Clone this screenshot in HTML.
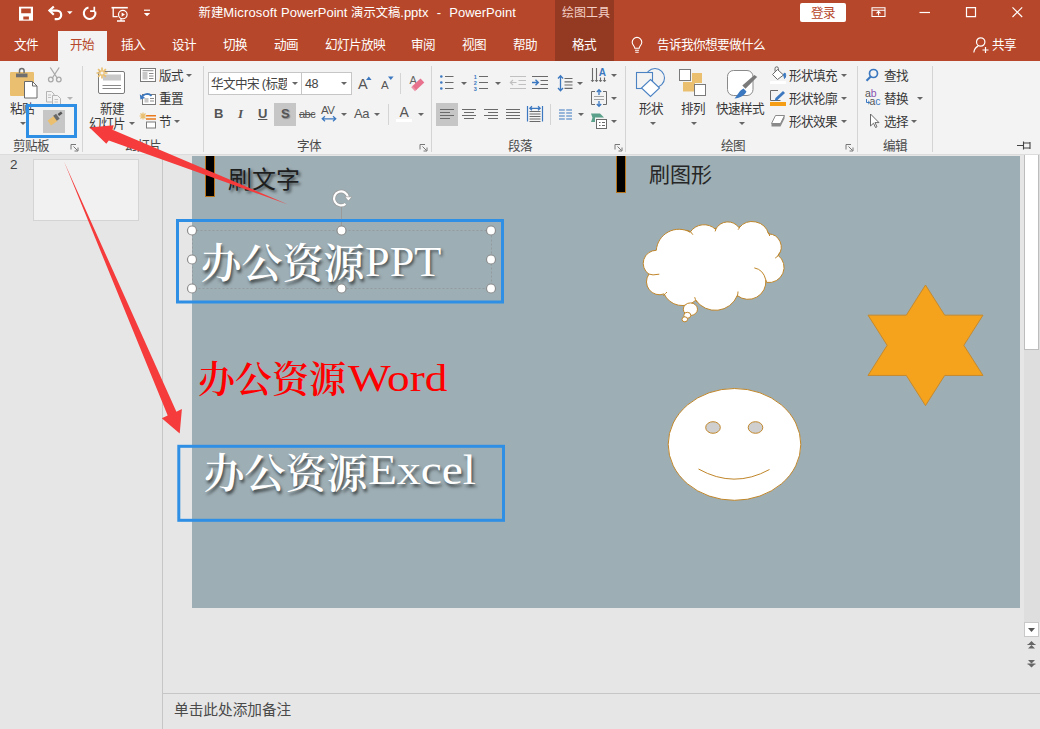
<!DOCTYPE html>
<html lang="zh-CN">
<head>
<meta charset="utf-8">
<title>PowerPoint</title>
<style>
*{box-sizing:border-box;margin:0;padding:0}
html,body{width:1040px;height:729px;overflow:hidden;background:#e6e6e6}
body{position:relative;font-family:"Liberation Sans","Noto Sans CJK SC",sans-serif;font-size:12px;color:#262626}
.abs{position:absolute}
#title{position:absolute;left:0;top:0;width:1040px;height:61px;background:#b7472a}
#ctx{position:absolute;left:555px;top:0;width:59px;height:61px;background:#953a22}
.tt{position:absolute;color:#fff;white-space:nowrap;line-height:16px}
.tab{position:absolute;top:37px;color:#fff;font-size:12.600px;letter-spacing:-0.600px;line-height:16px;white-space:nowrap}
#tabact{position:absolute;left:58px;top:31px;width:49px;height:30px;background:#f3f3f3}
#ribbon{position:absolute;left:0;top:61px;width:1040px;height:94px;background:#f3f3f3;border-bottom:1px solid #dcdcdc}
.sep{position:absolute;top:66px;width:1px;height:85.500px;background:#d4d4d4}
.gl{position:absolute;top:138.500px;font-size:12.600px;letter-spacing:-0.600px;line-height:15px;color:#4a4a4a;white-space:nowrap}
.rl{position:absolute;margin-top:1px;font-size:12.600px;letter-spacing:-0.600px;line-height:15px;color:#383838;white-space:nowrap}
.li{margin-top:0;letter-spacing:0}
.dd{position:absolute;width:0;height:0;border-left:3px solid transparent;border-right:3px solid transparent;border-top:3px solid #666}
svg{position:absolute;overflow:visible}
#left{position:absolute;left:0;top:155px;width:163px;height:574px;background:#e6e6e6;border-right:1px solid #c6c6c6}
#slide{position:absolute;left:192px;top:155.500px;width:828.400px;height:452px;background:#9daeb4}
.la{display:inline-block;transform-origin:0 50%;font-weight:400;line-height:1}
.st{position:absolute;white-space:nowrap;font-weight:600;font-family:"Liberation Serif","Noto Serif CJK SC",serif}
</style>
</head>
<body>
<div id="title"></div>
<div id="ctx"></div>
<div id="tabact"></div>

<!-- title bar -->
<svg style="left:17px;top:5.300px" width="120" height="18" viewBox="0 0 120 18" fill="none" stroke="#fff" stroke-width="1.6">
 <!-- save -->
 <path d="M2 1.700h14v14H2z" fill="#fff" stroke="none"/><path d="M4.200 3.400h9.600v4.800H4.200zM6.300 11.400h5.600v3H6.300z" fill="#b7472a" stroke="none"/>
 <!-- undo -->
 <path d="M32.500 5.600h7.400a4.300 4.300 0 0 1 0 8.600h-2.200" stroke-width="2.200"/><path d="M36.800 1.500l-4.400 4.100 4.400 4.100" stroke-width="2.200"/>
 <path d="M50 6.2h5.6l-2.8 3z" fill="#fff" stroke="none"/>
 <!-- redo -->
 <path d="M71.500 2.500A5.800 5.800 0 1 0 78.200 6.600" stroke-width="2.100"/><path d="M77.300 1.700v4.500h-4.200" stroke-width="1.700"/>
 <!-- slideshow -->
 <g transform="translate(0,1)"><path d="M94.500 1.700h16.300" stroke-width="1.600"/><path d="M96.200 2v8.600h4.500M100 15h8M104 12v3" stroke-width="1.300"/>
 <circle cx="105.800" cy="8.600" r="4.300" stroke-width="1.200" fill="#b7472a"/><path d="M104.600 6.500l3.300 2.100-3.300 2.100z" fill="#fff" stroke="none"/></g>
</svg>
<svg style="left:143px;top:9px" width="8" height="10" viewBox="0 0 8 10"><path d="M1 1.2h6" stroke="#fff" stroke-width="1.2"/><path d="M0.8 4h6.4L4 7.2z" fill="#fff"/></svg>
<div class="tt" style="left:198.500px;top:5px;font-size:13px" id="ttl"><span style="font-size:12.400px">新建</span><span style="letter-spacing:.15px">Microsoft</span> PowerPoint <span style="font-size:12.300px">演示文稿</span>.pptx&nbsp; <span style="padding:0 1px">-</span>&nbsp; PowerPoint</div>
<div class="tt" style="left:562px;top:5px;font-size:12px;color:#f3cfc6">绘图工具</div>
<div class="abs" style="left:800px;top:3px;width:46px;height:19px;background:#fff;color:#b7472a;font-size:12.600px;letter-spacing:-0.500px;line-height:20.500px;text-align:center;border-radius:2px">登录</div>
<svg style="left:870px;top:6px" width="160" height="14" viewBox="0 0 160 14" fill="none" stroke="#fff" stroke-width="1.1">
 <path d="M2 1.800h13v8.700h-13zM2 4.300h13"/><path d="M8.500 9.500V5.700M6.500 7.300l2-2 2 2"/>
 <path d="M49.500 6.500h10.500" stroke-width="1.200"/>
 <path d="M96.500 1.700h9v9h-9z" stroke-width="1.200"/>
 <path d="M142.500 1.300l9.700 9.700M152.200 1.300l-9.700 9.700" stroke-width="1.200"/>
</svg>
<!-- tabs -->
<div class="tab" style="left:14px">文件</div>
<div class="tab" style="left:70px;color:#b7472a">开始</div>
<div class="tab" style="left:121px">插入</div>
<div class="tab" style="left:172px">设计</div>
<div class="tab" style="left:223px">切换</div>
<div class="tab" style="left:274px">动画</div>
<div class="tab" style="left:325px">幻灯片放映</div>
<div class="tab" style="left:411px">审阅</div>
<div class="tab" style="left:462px">视图</div>
<div class="tab" style="left:513px">帮助</div>
<div class="tab" style="left:572px">格式</div>
<svg style="left:631px;top:36px" width="12" height="18" viewBox="0 0 12 18" fill="none" stroke="#fff" stroke-width="1.1"><path d="M3.8 12.2c0-2-2.600-3.100-2.600-6a4.800 4.800 0 0 1 9.600 0c0 2.900-2.600 4-2.600 6z"/><path d="M4 14.300h4M4.300 16.200h3.400"/></svg>
<div class="tab" style="left:657px">告诉我你想要做什么</div>
<svg style="left:972px;top:36px" width="18" height="18" viewBox="0 0 18 18" fill="none" stroke="#fff" stroke-width="1.2"><circle cx="8.700" cy="6" r="4.200"/><path d="M1.800 16.500c.5-3.600 2.400-5.600 4.400-6.400"/><path d="M10.500 14h6M13.500 11v6"/></svg>
<div class="tab" style="left:992px">共享</div>
<div id="ribbon"></div>

<!-- ribbon separators -->
<div class="sep" style="left:82px"></div><div class="sep" style="left:203px"></div><div class="sep" style="left:431px"></div>
<div class="sep" style="left:625px"></div><div class="sep" style="left:857px"></div><div class="sep" style="left:932px"></div>
<div class="sep" style="left:400px;top:73px;height:21px"></div><div class="sep" style="left:388px;top:104px;height:21px"></div><div class="sep" style="left:550px;top:104px;height:21px"></div>
<!-- group labels -->
<div class="gl" style="left:13px">剪贴板</div>
<div class="gl" style="left:125px">幻灯片</div>
<div class="gl" style="left:297px">字体</div>
<div class="gl" style="left:508px">段落</div>
<div class="gl" style="left:721px">绘图</div>
<div class="gl" style="left:883px">编辑</div>
<!-- clipboard -->
<div class="rl" style="left:10px;top:101px">粘贴</div>
<div class="dd" style="left:20px;top:122px"></div>
<div class="dd" style="left:67px;top:97px;border-top-color:#b5b5b5"></div>
<div class="abs" style="left:43px;top:110px;width:22px;height:23px;background:#c6c6c6"></div>
<!-- slides -->
<div class="rl" style="left:100px;top:101px">新建</div>
<div class="rl" style="left:89px;top:116px">幻灯片</div>
<div class="dd" style="left:129px;top:122px"></div>
<div class="rl" style="left:159px;top:68px">版式</div><div class="dd" style="left:186px;top:74px"></div>
<div class="rl" style="left:159px;top:91px">重置</div>
<div class="rl" style="left:159px;top:114px">节</div><div class="dd" style="left:174px;top:120px"></div>
<!-- font -->
<div class="abs" style="left:208px;top:72px;width:94px;height:23px;background:#fff;border:1px solid #c6c6c6"></div>
<div class="abs" style="left:301px;top:72px;width:51px;height:23px;background:#fff;border:1px solid #c6c6c6"></div>
<div class="rl" style="left:211px;top:76px;width:76px;overflow:hidden;color:#444">华文中宋 (标题</div>
<div class="dd" style="left:292px;top:82px"></div>
<div class="rl" style="left:305px;top:76px;color:#444">48</div>
<div class="dd" style="left:341px;top:82px"></div>
<div class="abs" style="left:274px;top:103px;width:22px;height:23px;background:#c6c6c6"></div>
<div class="abs" style="left:436px;top:103px;width:22px;height:23px;background:#c6c6c6"></div>
<div class="rl li" style="left:214px;top:106px;font-weight:bold;font-size:13px;color:#555">B</div>
<div class="rl li" style="left:238px;top:106px;font-style:italic;font-weight:bold;font-size:13px;color:#555;font-family:'Liberation Serif',serif">I</div>
<div class="rl li" style="left:258px;top:106px;font-weight:bold;font-size:13px;color:#555;text-decoration:underline">U</div>
<div class="rl li" style="left:281px;top:106px;font-weight:bold;font-size:13px;color:#555;text-shadow:1px 1px 1px #888">S</div>
<div class="rl li" style="left:299px;top:107px;font-size:11px;color:#555;text-decoration:line-through;letter-spacing:-0.5px">abc</div>
<div class="rl li" style="left:321px;top:103px;font-size:11.500px;color:#555;letter-spacing:-0.5px">AV</div>
<div class="dd" style="left:341px;top:113px"></div>
<div class="rl li" style="left:354px;top:106px;font-size:13px;color:#555;letter-spacing:-0.5px">Aa</div>
<div class="dd" style="left:374px;top:113px"></div>
<div class="rl li" style="left:399.500px;top:105px;font-size:14px;color:#555">A</div>
<div class="abs" style="left:396px;top:119px;width:16px;height:3px;background:#fff"></div>
<div class="dd" style="left:418px;top:113px"></div>
<div class="rl li" style="left:358px;top:76px;font-size:14.500px;line-height:17px;color:#555">A</div>
<div class="rl li" style="left:381px;top:78px;font-size:11.500px;color:#555">A</div>
<div class="rl li" style="left:409.500px;top:73px;font-size:11px;color:#666">A</div>
<!-- paragraph dropdowns -->
<div class="dd" style="left:461px;top:82px"></div><div class="dd" style="left:495px;top:82px"></div>
<div class="dd" style="left:577px;top:82px"></div><div class="dd" style="left:578px;top:113px"></div>
<div class="dd" style="left:611px;top:74px"></div><div class="dd" style="left:611px;top:97px"></div><div class="dd" style="left:611px;top:120px"></div>
<!-- drawing -->
<div class="rl" style="left:639px;top:101px">形状</div><div class="dd" style="left:650px;top:122px"></div>
<div class="rl" style="left:681px;top:101px">排列</div><div class="dd" style="left:691px;top:122px"></div>
<div class="rl" style="left:716px;top:101px">快速样式</div><div class="dd" style="left:739px;top:122px"></div>
<div class="rl" style="left:789px;top:68px">形状填充</div><div class="dd" style="left:841px;top:74px"></div>
<div class="rl" style="left:789px;top:91px">形状轮廓</div><div class="dd" style="left:841px;top:97px"></div>
<div class="rl" style="left:789px;top:114px">形状效果</div><div class="dd" style="left:841px;top:120px"></div>
<div class="abs" style="left:770px;top:102px;width:16px;height:4px;background:#f49d15"></div>
<div class="abs" style="left:770px;top:81px;width:16px;height:3px;background:#fff"></div>
<!-- editing -->
<div class="rl" style="left:884px;top:68px">查找</div>
<div class="rl" style="left:884px;top:91px">替换</div><div class="dd" style="left:917px;top:97px"></div>
<div class="rl" style="left:884px;top:114px">选择</div><div class="dd" style="left:911px;top:120px"></div>
<div class="rl li" style="left:865px;top:88px;font-size:10.500px;line-height:10px;color:#555">a<span style="color:#8a55b0">b</span></div>
<div class="rl li" style="left:869.500px;top:95.500px;font-size:10.500px;line-height:10px;color:#555">a<span style="color:#3b78c0">c</span></div>

<svg style="left:0;top:0" width="1040" height="160" viewBox="0 0 1040 160" fill="none">
<!-- paste -->
<g>
 <rect x="10" y="72" width="24" height="24" rx="1" fill="#eabf70"/>
 <path d="M16 73.500h11.500v3.800H16z" fill="#6f6f6f"/><path d="M19.500 73v-2.200a2.300 2.300 0 0 1 4.600 0V73" stroke="#6f6f6f" stroke-width="1.500"/>
 <path d="M24.500 81.500h8l4.500 4.500v12h-12.500z" fill="#fff" stroke="#6a6a6a" stroke-width="1"/><path d="M32.500 81.500v4.500h4.500" stroke="#6a6a6a" stroke-width="1"/>
</g>
<!-- cut -->
<g stroke="#a9a9a9" stroke-width="1.300">
 <path d="M50.300 67.500l7.200 11M59.200 67.500l-7.200 11"/><circle cx="50.800" cy="79.500" r="2.300"/><circle cx="58.800" cy="79.500" r="2.300"/>
</g>
<!-- copy -->
<g stroke="#b4b4b4" stroke-width="1" fill="#f3f3f3">
 <path d="M46.500 91.500h5l2.500 2.500v8h-7.500z"/><path d="M52.500 95.500h5l3 3v7h-8z"/><path d="M48 95h3M48 97.500h3M54.500 99.500h3.500M54.500 102h3.500" stroke-width=".8"/>
</g>
<!-- format painter -->
<g>
 <path d="M47.500 120.500l6.500-4.500 3.500 5-6.500 4.500z" fill="#eabf70"/>
 <path d="M53.200 115.700l2.900-2 3.600 5.100-2.900 2z" fill="#6a6a6a"/><path d="M57.600 114l3.400-2.600 1.500 2-3.400 2.600z" fill="#555"/>
</g>
<rect x="27.500" y="105.500" width="48" height="31" stroke="#2f8fe4" stroke-width="3"/>
<!-- launchers -->

<g transform="translate(71,144)" stroke="#777" stroke-width="1" fill="none"><path d="M0 5.500V.5h5M2.500 2.500l4 4M7 3.500v3.500H3.500"/></g><g transform="translate(420,144)" stroke="#777" stroke-width="1" fill="none"><path d="M0 5.500V.5h5M2.500 2.500l4 4M7 3.500v3.500H3.500"/></g><g transform="translate(615,144)" stroke="#777" stroke-width="1" fill="none"><path d="M0 5.500V.5h5M2.500 2.500l4 4M7 3.500v3.500H3.500"/></g><g transform="translate(846,144)" stroke="#777" stroke-width="1" fill="none"><path d="M0 5.500V.5h5M2.500 2.500l4 4M7 3.500v3.500H3.500"/></g>
<!-- new slide -->
<g>
 <rect x="98.500" y="71.500" width="26" height="22" rx="1.500" fill="#fff" stroke="#7a7a7a"/>
 <rect x="103" y="74.500" width="18" height="6" fill="#c8c8c8"/><path d="M102.500 85.500h18.500M102.500 88.500h18.500" stroke="#8a8a8a" stroke-width="1"/>
 <g stroke="#eabf70" stroke-width="1.700"><path d="M102 67.500v11M96.500 73h11M98.100 69.100l7.800 7.800M105.900 69.100l-7.800 7.800"/></g><circle cx="102" cy="73" r="1.600" fill="#f3f3f3"/>
</g>
<!-- layout -->
<g><rect x="140.500" y="68.500" width="15" height="13" fill="#fff" stroke="#7a7a7a"/><rect x="142.500" y="72" width="5" height="7.500" fill="#c8c8c8"/><path d="M142.500 70.700h11M149 73.500h4.500M149 76h4.500M149 78.500h4.500" stroke="#8a8a8a" stroke-width="1"/></g>
<!-- reset -->
<g><rect x="142.500" y="94.500" width="13" height="10" fill="#fff" stroke="#7a7a7a"/><rect x="144.500" y="98" width="4" height="4.500" fill="#c8c8c8"/><path d="M150 98.500h4M150 101h4" stroke="#8a8a8a" stroke-width="1"/>
 <path d="M142 98.500c0-4 6-6.500 9.500-2.500" stroke="#3b78c0" stroke-width="1.700"/><path d="M139.800 94.200l.6 5.300 4.800-1.600z" fill="#3b78c0"/></g>
<!-- section -->
<g><rect x="146.500" y="122" width="9" height="6" fill="#fff" stroke="#7a7a7a"/><path d="M146 115.800h10M146 119h10" stroke="#e97b1e" stroke-width="1.500"/>
 <g stroke="#eabf70" stroke-width="1.200"><path d="M143 112.500v7M139.500 116h7M140.500 113.500l5 5M145.500 113.500l-5 5"/></g></g>
<!-- font grow/shrink triangles -->
<path d="M366 80l2.800-3.400 2.800 3.400z" fill="#3b78c0"/><path d="M388 76.500h5.600l-2.800 3.400z" fill="#3b78c0"/>
<!-- eraser -->
<path d="M412.500 86l8-7.500 3.800 4-8 7.500z" fill="#e8718d"/><path d="M411.200 87.200l1.800-1.700 3.800 4-1.800 1.700z" fill="#e8718d" opacity=".75"/>
<!-- AV arrow -->
<path d="M322.500 118.800h13M325 116.300l-2.800 2.500 2.800 2.500M333 116.300l2.800 2.500-2.800 2.500" stroke="#3b78c0" stroke-width="1.200"/>
<!-- bullets -->
<g stroke="#6a6a6a" stroke-width="1.200"><path d="M445 76.500h8.500M445 82.500h8.500M445 88.500h8.500"/></g>
<g fill="#3b78c0"><circle cx="441.300" cy="76.500" r="1.300"/><circle cx="441.300" cy="82.500" r="1.300"/><circle cx="441.300" cy="88.500" r="1.300"/></g>
<!-- numbering -->
<g stroke="#6a6a6a" stroke-width="1.200"><path d="M479 76.500h9M479 82.500h9M479 88.500h9"/></g>
<g fill="#3b78c0" font-size="5.500" font-weight="bold" font-family="Liberation Sans, sans-serif"><text x="473.800" y="78.600">1</text><text x="473.800" y="84.600">2</text><text x="473.800" y="90.600">3</text></g>
<!-- decrease indent (disabled) -->
<g stroke="#c0c0c0" stroke-width="1.100"><path d="M510 76.500h16M518.500 80.500h7.500M518.500 84.500h7.500M510 88.500h16M510.500 82.500h6"/><path d="M513 80l-2.700 2.500 2.700 2.500"/></g>
<!-- increase indent -->
<g stroke="#6a6a6a" stroke-width="1.100"><path d="M532 76.500h16M540.500 80.500h7.500M540.500 84.500h7.500M532 88.500h16"/></g>
<g stroke="#3b78c0" stroke-width="1.400"><path d="M532 82.500h6M535.500 79.800l2.800 2.700-2.800 2.700"/></g>
<!-- line spacing -->
<g stroke="#6a6a6a" stroke-width="1.200"><path d="M564.500 78.500h8M564.500 81.800h8M564.500 85h8M564.500 88.300h8"/></g>
<g stroke="#3b78c0" stroke-width="1.300"><path d="M560.500 76v14.500M558 78.500l2.500-2.700 2.500 2.700M558 88l2.500 2.700 2.500-2.700"/></g>
<!-- align -->
<g stroke="#6a6a6a" stroke-width="1.200">
 <path d="M440 109.500h14M440 112.500h10M440 115.500h14M440 118.500h10"/>
 <path d="M462 109.500h14M464 112.500h10M462 115.500h14M464 118.500h10"/>
 <path d="M484 109.500h14M488 112.500h10M484 115.500h14M488 118.500h10"/>
 <path d="M506 109.500h14M506 112.500h14M506 115.500h14M506 118.500h14"/>
 <path d="M529.500 111.500h11M529.500 114h11M529.500 116.500h11M529.500 119h11M529.500 121.500h11" stroke-width="1"/>
</g>
<g stroke="#3b78c0" stroke-width="1.200"><path d="M527.500 106v15.500M542.500 106v15.500M530 108.300h10M532 106.300l-2.200 2 2.200 2M538 106.300l2.200 2-2.200 2"/></g>
<!-- columns -->
<g stroke="#3b78c0" stroke-width="1.200"><path d="M559 110h5.800M566.200 110h5.800M559 113h5.800M566.200 113h5.800M559 116h5.800M566.200 116h5.800M559 119h5.800M566.200 119h5.800"/></g>
<!-- text direction -->
<g stroke="#6a6a6a" stroke-width="1.100"><path d="M592.500 68v13.500M596.500 68v13.500M600.500 77.500v4M604.500 77.500v4"/><path d="M591 80l1.500 1.800 1.500-1.800M595 80l1.500 1.800 1.500-1.800M599 80l1.500 1.800 1.500-1.800M603 80l1.500 1.800 1.500-1.800" stroke-width=".9"/></g>
<text x="598.800" y="76" font-size="10" font-weight="bold" fill="#3b78c0" font-family="Liberation Sans, sans-serif">A</text>
<!-- align text -->
<g stroke="#6a6a6a" stroke-width="1"><path d="M595 91.500h-3.500v13h3.500M603 91.500h3.500v13h-3.500"/><path d="M594 96.500h10M594 99.500h10" stroke="#999" stroke-width=".9"/></g>
<g stroke="#3b78c0" stroke-width="1.300"><path d="M599 90v5M596.800 92l2.200-2.300 2.200 2.300M599 101v5M596.800 104l2.200 2.300 2.200-2.300"/></g>
<!-- smartart -->
<path d="M591 113.500h9l4 4h-9v4.500h-4l1.500-4.300z" fill="#5aa08a"/>
<rect x="596.500" y="119.500" width="10" height="9" fill="#fff" stroke="#6a6a6a"/><path d="M599 122.500h1.500M602 122.500h3M599 125.500h1.500M602 125.500h3" stroke="#6a6a6a" stroke-width="1"/>
<!-- shapes -->
<g stroke="#4a82c3" stroke-width="1.100"><circle cx="655" cy="78" r="9.500" fill="#f3f3f3"/><rect x="636.500" y="72.500" width="16" height="16" fill="#f3f3f3"/><path d="M650.500 79.500l9 8.500-9 8.500-9-8.500z" fill="#fff"/></g>
<!-- arrange -->
<rect x="692" y="73" width="10" height="10" fill="#eabf70"/><rect x="683" y="82" width="12" height="9.500" fill="#eabf70"/>
<rect x="679.500" y="69.500" width="11" height="11" fill="#fff" stroke="#7a7a7a"/><rect x="694.500" y="84.500" width="11" height="11" fill="#fff" stroke="#7a7a7a"/>
<!-- quick styles -->
<rect x="727.500" y="70.500" width="25.500" height="25" rx="6" fill="#fff" stroke="#8a8a8a"/>
<path d="M756 77l-10.500 10.500-2-2L754.500 76z" fill="#7a7a7a" stroke="#7a7a7a" stroke-width="1.600"/>
<path d="M743.500 88.500l3 3c-2 4-6 6.500-12 7 3-3 4.500-8 9-10z" fill="#3b78c0"/>
<!-- shape fill -->
<g stroke="#6a6a6a" stroke-width="1"><path d="M777.500 69.500l6 5.500-6 4.500-5-5z" fill="#fff"/><path d="M775 71.500v-3a1.700 1.700 0 0 1 3.400 0v2"/></g><path d="M783.500 74l1.500-1c1 1.500 1 4-.5 5.500z" fill="#3b78c0" stroke="#3b78c0"/>
<!-- outline -->
<path d="M778 90.500h-7.500v10h10" stroke="#6a6a6a" stroke-width="1"/><path d="M783 91l2 2-7.500 7-2.800.8.800-2.800z" fill="#3b78c0"/>
<!-- effects -->
<path d="M775.500 115.500h9l-4 8h-9z" fill="#fff" stroke="#8a8a8a"/><path d="M771.500 123.500h9l4-8v3l-4 8h-9z" fill="#8a8a8a"/>
<!-- find -->
<circle cx="873.500" cy="73.500" r="4" stroke="#3b78c0" stroke-width="1.700"/><path d="M870.500 76.800l-4 4" stroke="#3b78c0" stroke-width="2.200"/>
<!-- replace arrow -->
<path d="M866.500 99v3.500h3M868.200 101l1.700 1.500-1.700 1.500" stroke="#3b78c0" stroke-width="1"/>
<!-- select -->
<path d="M870.500 114v12l3-2.800 2 4.300 1.500-.7-2-4.200h4z" fill="#fff" stroke="#6a6a6a" stroke-width="1"/>
<!-- pin -->
<g stroke="#444" stroke-width="1.100"><path d="M1017 145.500h6.500M1023.500 141.500v8M1023.500 143h6.500v5h-6.500M1030 142v7"/></g>
</svg>

<div id="left"></div>
<div id="slide"></div>
<!-- left panel -->
<div class="abs" style="left:10px;top:156.500px;font-size:13.500px;line-height:15px;color:#444">2</div>
<div class="abs" style="left:33px;top:159px;width:106px;height:62px;background:#f1f1f1;border:1px solid #d4d4d4"></div>
<!-- notes -->
<div class="abs" style="left:163px;top:693px;width:877px;height:1px;background:#c6c6c6"></div>
<div class="abs" style="left:174px;top:700px;font-size:14.670px;line-height:20px;color:#4a4a4a;white-space:nowrap">单击此处添加备注</div>
<!-- scrollbar -->
<div class="abs" style="left:1024px;top:155px;width:16px;height:467px;background:#dedede"></div>
<div class="abs" style="left:1024px;top:155px;width:15px;height:195px;background:#fff;border:1px solid #bdbdbd;border-top:none"></div>
<div class="abs" style="left:1024px;top:622px;width:15px;height:15px;background:#fff;border:1px solid #c8c8c8"></div>
<svg style="left:1023px;top:620px" width="17" height="55" viewBox="0 0 17 55"><path d="M5 8h7l-3.500 4z" fill="#555"/><g fill="#666"><path d="M5 24.500l3.500-3.500 3.500 3.500zM5 28.500l3.500-3.500 3.500 3.500z"/><path d="M5 40l3.500 3.500 3.500-3.500zM5 44l3.500 3.500 3.500-3.500z"/></g><path d="M4.500 24.500h8M4.500 44h8" stroke="#666" stroke-width="1"/></svg>
<!-- slide content -->
<div class="abs" style="left:205px;top:155.500px;width:10px;height:41px;background:#000;border:1px solid #b8741a;border-top:none"></div>
<div class="abs" style="left:616px;top:155.500px;width:10px;height:37.500px;background:#000;border:1px solid #b8741a;border-top:none"></div>
<div class="abs" id="t1" style="left:228px;top:164px;font-size:24px;line-height:32px;color:#1e1e1e;white-space:nowrap;text-shadow:2px 2px 3px rgba(0,0,0,.55)">刷文字</div>
<div class="abs" id="t2" style="left:649px;top:161px;font-size:21px;line-height:28px;color:#262626;white-space:nowrap">刷图形</div>
<div class="st" id="s1" style="left:200.500px;top:236px;font-size:41px;line-height:56px;color:#fff;text-shadow:1.500px 2.500px 3px rgba(0,0,0,.55)">办公资源<span class="la" style="font-size:43px;transform:translateY(-2.400px) scaleX(1.03)">PPT</span></div>
<div class="st" id="s2" style="left:198px;top:355px;font-size:37px;line-height:52px;color:#f00">办公资源<span class="la" style="font-size:38px;margin-left:1.500px;transform:translateY(-2.500px) scaleX(1.190)">Word</span></div>
<div class="st" id="s3" style="left:203.500px;top:446px;font-size:41px;line-height:56px;color:#fff;text-shadow:1.500px 2.500px 3px rgba(0,0,0,.55)">办公资源<span class="la" style="font-size:42px;transform:translateY(-3.600px) scaleX(1.130)">Excel</span></div>
<svg style="left:0;top:0" width="1040" height="729" viewBox="0 0 1040 729" fill="none">
 <!-- shapes -->
 <g stroke="#c0862a" stroke-width="1" fill="#fff">
  <path d="M656.3 250.3A22.7 22.7 0 0 1 690.1 232.2L690.1 232.2A16.7 16.7 0 0 1 715.6 229.4L715.6 229.4A13.7 13.7 0 0 1 739.1 227.8L739.1 227.8A17.0 17.0 0 0 1 768.6 233.9L768.6 233.9A13.0 13.0 0 0 1 778.1 255.3L778.1 255.3A15.2 15.2 0 0 1 766.6 282.4L765.8 279.9A17.7 17.7 0 0 1 737.3 295.6L737.3 295.6A23.8 23.8 0 0 1 695.8 300.2L695.8 300.2A19.9 19.9 0 0 1 664.1 293.9L664.1 293.9A13.0 13.0 0 0 1 648.9 274.2L648.9 274.2A13.1 13.1 0 0 1 656.3 250.3Z"/><path d="M686.8 230.1 Q691.3 231.1 692.9 234.7M715.6 227.8 Q716.2 229.9 715.1 231.4M739.9 226.1 Q739.5 228.3 738.1 229.7M767.9 232.2 Q769.7 233.9 769.6 236.0M779.8 252.5 Q778.8 256.2 775.2 258.1M754.3 267.9 Q763.3 269.5 765.8 279.9M738.0 291.5 Q738.1 293.7 737.0 296.9M694.7 297.2 Q695.1 299.7 697.1 302.2M667.0 292.0 Q665.5 293.3 663.4 295.9M648.1 273.9 Q652.4 275.7 659.3 274.2" fill="none"/><ellipse cx="690.4" cy="309.2" rx="7.1" ry="6.3"/><ellipse cx="687.3" cy="315.3" rx="3.5" ry="3.0"/><ellipse cx="684.8" cy="319.3" rx="2.8" ry="2.5"/>
  <ellipse cx="734.500" cy="444.400" rx="66.300" ry="55.900"/>
  <ellipse cx="713" cy="427.500" rx="7.300" ry="5.800" fill="#cfcfcf"/><ellipse cx="755.500" cy="427.500" rx="7.300" ry="5.800" fill="#cfcfcf"/>
  <path d="M698.500 469Q734 489 769.500 469.500" fill="none"/>
  <path d="M925.500 285l19.170 30.150h38.330l-19.170 30.150 19.170 30.150h-38.330L925.500 405.600l-19.170-30.150h-38.330l19.170-30.150-19.170-30.150h38.330z" fill="#f5a21d" stroke="#c58a2e"/>
 </g>
 <!-- selection -->
 <rect x="192.500" y="230.500" width="299" height="58" stroke="#8d8d8d" stroke-opacity=".55" stroke-width="1" stroke-dasharray="2 2"/>
 <path d="M341.500 207v19" stroke="#9a9a9a" stroke-width="1"/>
 <g fill="#fff" stroke="#8c8c8c" stroke-width="1.200"><circle cx="192" cy="230.500" r="4.500"/><circle cx="341.500" cy="230.500" r="4.500"/><circle cx="491" cy="230.500" r="4.500"/><circle cx="192" cy="259.500" r="4.500"/><circle cx="491" cy="259.500" r="4.500"/><circle cx="192" cy="288.500" r="4.500"/><circle cx="341.500" cy="288.500" r="4.500"/><circle cx="491" cy="288.500" r="4.500"/></g>
 <path d="M345.500 203.800A7 7 0 1 1 348 197.500" stroke="#9a9a9a" stroke-width="3.600"/><path d="M345.500 203.800A7 7 0 1 1 348 197.500" stroke="#fff" stroke-width="2.200"/>
 <path d="M344.800 196.800h7.200l-3.600 4.200z" fill="#fff" stroke="#9a9a9a" stroke-width=".7"/>
 <!-- blue boxes -->
 <rect x="177.500" y="220.500" width="325" height="81.500" stroke="#2f8fe4" stroke-width="3"/>
 <rect x="178.800" y="446.300" width="324.700" height="74" stroke="#2f8fe4" stroke-width="3"/>
 <!-- red arrows -->
 <path d="M89.500 127.600L113.700 125.200l-1.200 4.500L288 204.400 108.800 140.400l-2.500 3.400z" fill="#f53b3b"/>
 <path d="M64 161.500L176.400 411.700l5.500-2.700-2.200 24.400-17.900-15.100 5.900-2.700z" fill="#f53b3b"/>
</svg>

</body>
</html>
